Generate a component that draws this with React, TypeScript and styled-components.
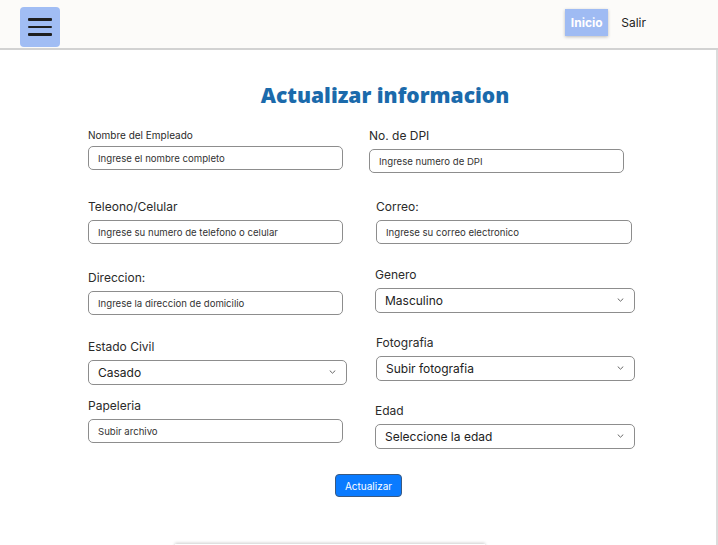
import styled, { createGlobalStyle } from 'styled-components';

const GlobalStyle = createGlobalStyle`
  html, body {
    margin: 0;
    padding: 0;
    background: #ffffff;
    font-family: Inter, "Liberation Sans", sans-serif;
    color: #222;
  }
  * {
    box-sizing: border-box;
  }
`;

interface FieldSpec {
  label: string;
  labelSize: number;
  top: number;
  gap: number;
  shift: number;
  width: number;
  kind: 'input' | 'select';
  value: string;
}

const leftFields: FieldSpec[] = [
  { label: 'Nombre del Empleado', labelSize: 10, top: 2, gap: 3, shift: 0, width: 255, kind: 'input', value: 'Ingrese el nombre completo' },
  { label: 'Teleono/Celular', labelSize: 12, top: 29, gap: 5, shift: 0, width: 255, kind: 'input', value: 'Ingrese su numero de telefono o celular' },
  { label: 'Direccion:', labelSize: 12, top: 26, gap: 5, shift: 0, width: 255, kind: 'input', value: 'Ingrese la direccion de domicilio' },
  { label: 'Estado Civil', labelSize: 12, top: 24, gap: 5, shift: 0, width: 259, kind: 'select', value: 'Casado' },
  { label: 'Papeleria', labelSize: 12, top: 13, gap: 5, shift: 0, width: 255, kind: 'input', value: 'Subir archivo' },
];

const rightFields: FieldSpec[] = [
  { label: 'No. de DPI', labelSize: 12, top: 3, gap: 5, shift: 0, width: 255, kind: 'input', value: 'Ingrese numero de DPI' },
  { label: 'Correo:', labelSize: 12, top: 26, gap: 5, shift: 7, width: 256, kind: 'input', value: 'Ingrese su correo electronico' },
  { label: 'Genero', labelSize: 12, top: 23, gap: 5, shift: 6, width: 260, kind: 'select', value: 'Masculino' },
  { label: 'Fotografia', labelSize: 12, top: 22, gap: 5, shift: 7, width: 259, kind: 'select', value: 'Subir fotografia' },
  { label: 'Edad', labelSize: 12, top: 22, gap: 5, shift: 6, width: 260, kind: 'select', value: 'Seleccione la edad' },
];

function Chevron() {
  return (
    <svg width="7" height="4" viewBox="0 0 7 4" fill="none">
      <path d="M1 0.8l2.5 2.4 2.5-2.4" stroke="#666" strokeWidth="1" strokeLinecap="round" strokeLinejoin="round" />
    </svg>
  );
}

function FormField({ spec }: { spec: FieldSpec }) {
  return (
    <Field $top={spec.top} $gap={spec.gap} $shift={spec.shift} $width={spec.width}>
      <Label $size={spec.labelSize}>{spec.label}</Label>
      {spec.kind === 'input' ? (
        <TextInput placeholder={spec.value} />
      ) : (
        <SelectWrap>
          <Select defaultValue={spec.value}>
            <option>{spec.value}</option>
          </Select>
          <ChevronBox>
            <Chevron />
          </ChevronBox>
        </SelectWrap>
      )}
    </Field>
  );
}

export default function App() {
  return (
    <>
      <GlobalStyle />
      <Header>
        <MenuButton aria-label="menu">
          <MenuLine />
          <MenuLine />
          <MenuLine />
        </MenuButton>
        <Nav>
          <HomeLink>Inicio</HomeLink>
          <NavLink>Salir</NavLink>
        </Nav>
      </Header>
      <Main>
        <Title>Actualizar informacion</Title>
        <FormGrid>
          <Column $left={88}>
            {leftFields.map((f) => (
              <FormField key={f.label} spec={f} />
            ))}
          </Column>
          <Column $left={22}>
            {rightFields.map((f) => (
              <FormField key={f.label} spec={f} />
            ))}
          </Column>
        </FormGrid>
        <ButtonRow>
          <SubmitBtn>Actualizar</SubmitBtn>
        </ButtonRow>
        <FooterEdge />
      </Main>
    </>
  );
}

const Header = styled.header`
  display: flex;
  align-items: center;
  justify-content: space-between;
  height: 50px;
  padding: 0 72px 3px 20px;
  background: #fcfbf9;
  border-bottom: 2px solid #d2d2d2;
`;

const MenuButton = styled.button`
  display: flex;
  flex-direction: column;
  justify-content: center;
  align-items: center;
  gap: 5px;
  width: 40px;
  height: 40px;
  margin-top: 9px;
  border: none;
  border-radius: 4px;
  background: #a1bdf4;
  padding: 0;
`;

const MenuLine = styled.span`
  display: block;
  width: 24px;
  height: 2.5px;
  background: #1f1f1f;
  border-radius: 1px;
`;

const Nav = styled.nav`
  display: flex;
  align-items: center;
  gap: 13px;
`;

const HomeLink = styled.span`
  display: flex;
  align-items: center;
  justify-content: center;
  width: 43px;
  height: 27px;
  background: #9fbbf3;
  color: #fff;
  font-size: 12px;
  font-weight: 700;
  box-shadow: 0 1px 3px rgba(0, 0, 0, 0.25);
`;

const NavLink = styled.span`
  font-size: 12px;
  color: #222;
`;

const Main = styled.main`
  width: 718px;
  border-right: 2px solid #dcdcdc;
  overflow: hidden;
`;

const Title = styled.h1`
  margin: 31px 0 0 0;
  text-align: center;
  padding-left: 54px;
  font-family: "Open Sans", Lato, sans-serif;
  font-weight: 800;
  font-size: 21px;
  line-height: 28px;
  color: #1b6aab;
`;

const FormGrid = styled.div`
  display: flex;
  margin-top: 16px;
`;

const Column = styled.div<{ $left: number }>`
  display: flex;
  flex-direction: column;
  margin-left: ${(p) => p.$left}px;
`;

const Field = styled.div<{ $top: number; $gap: number; $shift: number; $width: number }>`
  display: flex;
  flex-direction: column;
  gap: ${(p) => p.$gap}px;
  margin-top: ${(p) => p.$top}px;
  margin-left: ${(p) => p.$shift}px;
  width: ${(p) => p.$width}px;
`;

const Label = styled.label<{ $size: number }>`
  display: block;
  height: 16px;
  line-height: 16px;
  font-size: ${(p) => p.$size}px;
  color: #2a2a2a;
`;

const TextInput = styled.input`
  width: 100%;
  height: 24px;
  padding: 0 9px;
  border: 1px solid #8d8d8d;
  border-radius: 5px;
  font-family: Inter, "Liberation Sans", sans-serif;
  font-size: 9.6px;
  background: #fff;
  &::placeholder {
    color: #333;
  }
`;

const SelectWrap = styled.div`
  position: relative;
  width: 100%;
`;

const Select = styled.select`
  width: 100%;
  height: 25px;
  padding: 0 9px;
  appearance: none;
  border: 1px solid #8d8d8d;
  border-radius: 5px;
  background: #fff;
  font-family: Inter, "Liberation Sans", sans-serif;
  font-size: 12px;
  color: #222;
`;

const ChevronBox = styled.span`
  position: absolute;
  right: 11px;
  top: 10px;
  display: flex;
  pointer-events: none;
`;

const ButtonRow = styled.div`
  display: flex;
  padding-left: 335px;
  margin-top: 25px;
`;

const SubmitBtn = styled.button`
  width: 67px;
  height: 23px;
  border: 1px solid #3c5a80;
  border-radius: 4px;
  background: #0a7bff;
  color: #fff;
  font-family: Inter, "Liberation Sans", sans-serif;
  font-size: 10px;
  padding: 0;
`;

const FooterEdge = styled.div`
  width: 310px;
  height: 20px;
  margin: 47px 0 0 175px;
  box-shadow: 0 -1px 3px rgba(0, 0, 0, 0.2);
`;
